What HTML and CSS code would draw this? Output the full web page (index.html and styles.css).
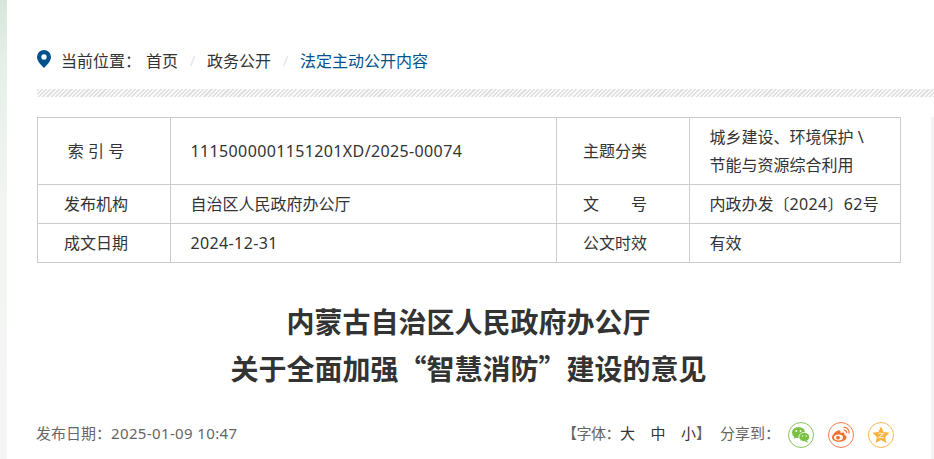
FILE: index.html
```html
<!DOCTYPE html>
<html lang="zh">
<head>
<meta charset="utf-8">
<title>内蒙古自治区人民政府办公厅关于全面加强“智慧消防”建设的意见</title>
<link rel="stylesheet" href="styles.css">
</head>
<body>
<div class="page">
  <div class="side"></div>
  <main class="main">
    <nav class="crumbs">
      <svg class="pin" width="14" height="18" viewBox="0 0 14 18"><path fill="#00528f" fill-rule="evenodd" d="M7 0a7 7 0 0 1 7 7c0 4-4 8-7 11C4 15 0 11 0 7a7 7 0 0 1 7-7zm0 4.300a2.700 2.700 0 1 0 0 5.400 2.700 2.700 0 0 0 0-5.400z"/></svg>
      <span class="here">当前位置：</span>
      <a class="crumb">首页</a><span class="sep">/</span>
      <a class="crumb">政务公开</a><span class="sep">/</span>
      <a class="crumb cur">法定主动公开内容</a>
    </nav>
    <div class="stripe"></div>
    <table class="meta">
      <colgroup><col class="c1"><col class="c2"><col class="c3"><col class="c4"></colgroup>
      <tr class="r1">
        <th>索 引 号</th><td class="nums">1115000001151201XD/2025-00074</td>
        <th>主题分类</th><td class="topic">城乡建设、环境保护 \<br>节能与资源综合利用</td>
      </tr>
      <tr class="r2">
        <th>发布机构</th><td>自治区人民政府办公厅</td>
        <th>文&emsp;&emsp;号</th><td>内政办发〔<span class="nums">2024</span>〕<span class="nums">62</span>号</td>
      </tr>
      <tr class="r2">
        <th>成文日期</th><td class="nums">2024-12-31</td>
        <th>公文时效</th><td>有效</td>
      </tr>
    </table>
    <h1 class="title">内蒙古自治区人民政府办公厅<br>关于全面加强“智慧消防”建设的意见</h1>
    <div class="info">
      <span class="date">发布日期：<span class="nums">2025-01-09 10:47</span></span>
      <div class="tools">
        <span class="bracket">【字体：</span>
        <span class="sizes"><a>大</a><a>中</a><a>小</a></span>
        <span class="close">】</span>
        <span class="share">分享到：</span>
        <a class="ico wx"><svg width="20" height="18" viewBox="0 0 20 18"><ellipse cx="7.500" cy="6.500" rx="6.500" ry="5.500" fill="#7ac143"/><path d="M3.500 10l-.8 3 3.300-1.800z" fill="#7ac143"/><ellipse cx="13.300" cy="11" rx="5.400" ry="4.600" fill="#7ac143" stroke="#fff" stroke-width=".8"/><path d="M16 14.500l1 2.300-3-1.500z" fill="#7ac143"/><circle cx="5.300" cy="5" r=".9" fill="#fff"/><circle cx="9.500" cy="5" r=".9" fill="#fff"/><circle cx="11.500" cy="10" r=".7" fill="#fff"/><circle cx="15.200" cy="10" r=".7" fill="#fff"/></svg></a>
        <a class="ico wb"><svg width="20" height="18" viewBox="0 0 20 18"><path d="M8 15.800c-4 0-7-1.800-7-4.300 0-2.800 4.500-7.300 7-7.300 1.700 0 1.800 1.500 1.400 2.800 2-.7 4.200-.8 4.200.9 0 .5-.1.800-.3 1.100 1.300.4 2.200 1.100 2.200 2.400 0 2.300-3.400 4.400-7.500 4.400z" fill="#f4722b"/><ellipse cx="7.500" cy="11.500" rx="4.500" ry="3" fill="#fff"/><circle cx="7" cy="11.700" r="1.900" fill="#f4722b"/><path d="M12.500 1.500a5 5 0 0 1 5.500 6M12.800 4.200a2.400 2.400 0 0 1 2.700 3" fill="none" stroke="#f4722b" stroke-width="1.200"/></svg></a>
        <a class="ico qz"><svg width="18" height="18" viewBox="0 0 18 18"><path d="M9 .5l2.600 5.500 5.900.8-4.300 4.100 1.100 6L9 14l-5.300 2.900 1.100-6L.5 6.800 6.400 6z" fill="#fbb03b"/><path d="M6.500 7.300h5l-4.700 4.400h5.200" fill="none" stroke="#fde3b5" stroke-width="1.300"/></svg></a>
      </div>
    </div>
  </main>
  <div class="edge"></div>
</div>
</body>
</html>
```
FILE: styles.css
```css
* { box-sizing: border-box; }
html, body { margin: 0; padding: 0; height: 100%; overflow: hidden; background: #fff; }
body { font-family: "Noto Sans", "Noto Sans CJK SC", sans-serif; color: #333; }
.page { display: flex; height: 459px; width: 934px; }
.side { width: 7px; flex: none; background: linear-gradient(#d7e6da 0, #e6efe8 60px, #f2f5f2 200px, #f5f5f5 100%); }
.edge { width: 3px; flex: none; margin-top: 117px; background: #f4f4f4; }
.main { flex: 1; min-width: 0; padding-left: 30px; }
.crumbs { height: 89px; padding-top: 51px; display: flex; align-items: flex-start; font-size: 16px; line-height: 20px; color: #333; }
.pin { margin-right: 10px; margin-top: -1px; flex: none; }
.here { width: 85px; }
.crumb { color: #333; }
.crumb.cur { color: #00528f; }
.sep { color: #dfe3e8; width: 29px; text-align: center; font-size: 14px; }
.stripe { height: 8px; margin-right: -3px; background: repeating-linear-gradient(135deg, #e0e0e0 0, #e0e0e0 1.500px, #fafafa 1.500px, #fafafa 3px); }
.meta { margin-top: 20px; width: 864px; border-collapse: collapse; table-layout: fixed; font-size: 16px; color: #333; }
.c1 { width: 133px; }
.c2 { width: 386px; }
.c3 { width: 133px; }
.meta th, .meta td { border: 1px solid #ccc; font-weight: normal; padding: 0; line-height: 24px; }
.meta th { text-align: center; padding-right: 16px; }
.meta td { padding-left: 19.500px; }
.nums { letter-spacing: .37px; }
.r1 { height: 67px; }
.r2 { height: 39px; }
.meta .topic { line-height: 28px; }
.title { margin: 35px 0 0; padding-right: 31px; text-align: center; font-family: "Noto Sans CJK SC", sans-serif; font-size: 28px; line-height: 47px; font-weight: bold; color: #333; }
.info { margin-top: 26px; margin-left: -1px; display: flex; justify-content: space-between; align-items: center; padding-right: 37px; font-size: 15px; color: #666; height: 28px; }
.tools { display: flex; align-items: center; }
.bracket { letter-spacing: -.500px; white-space: nowrap; }
.sizes { display: flex; gap: 15.500px; color: #333; }
.share { margin-left: 9px; width: 68px; }
.ico { width: 26px; height: 26px; border-radius: 50%; border: 1px solid; display: flex; align-items: center; justify-content: center; margin-left: 14px; margin-top: 6px; }
.share + .ico { margin-left: 0; }
.wx { border-color: #85c75c; }
.wb { border-color: #f67e4e; }
.qz { border-color: #fdb94f; }
```
